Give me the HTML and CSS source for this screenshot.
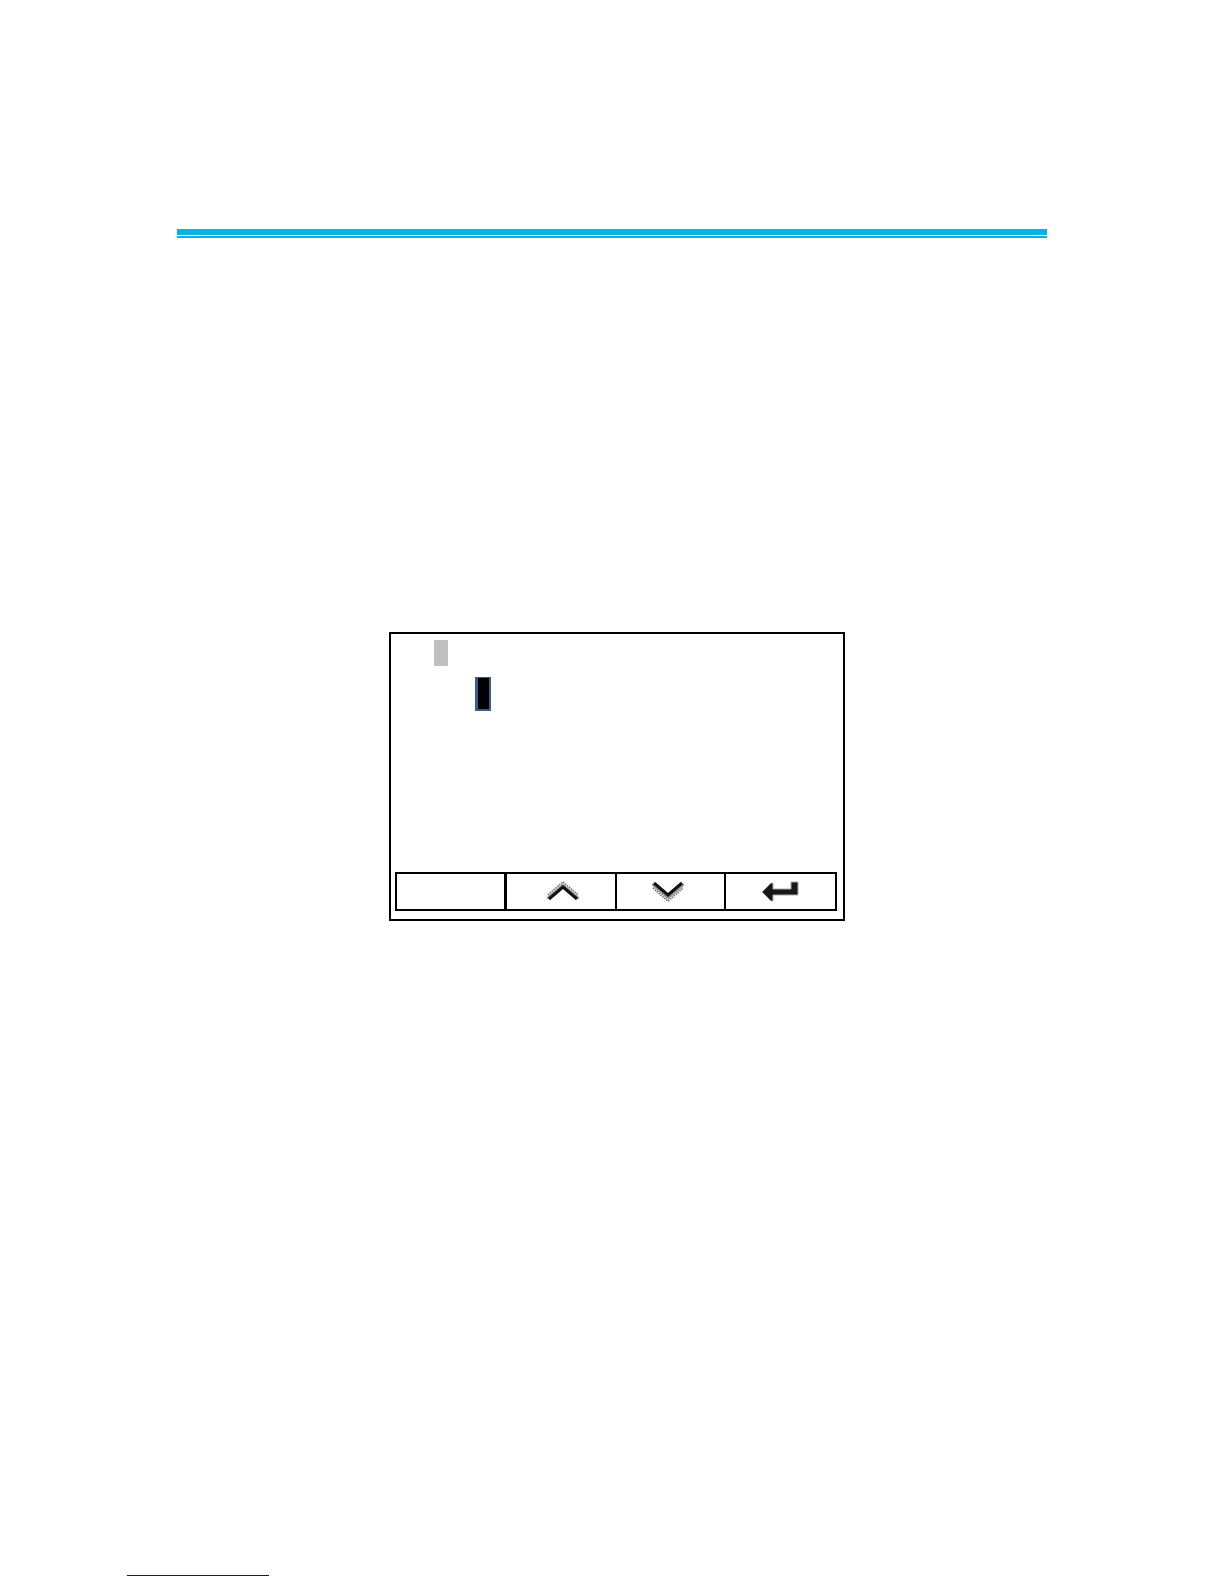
FILE: index.html
```html
<!DOCTYPE html>
<html lang="en">
<head>
<meta charset="utf-8">
<meta name="viewport" content="width=device-width, initial-scale=1">
<title>Display</title>
<link rel="stylesheet" href="styles.css">
</head>
<body class="page">
<header class="header"><div class="rule"></div></header>
<main class="content">
  <section class="screen" aria-label="Display">
    <div class="lines">
      <div class="mark"></div>
      <div class="cursor"></div>
    </div>
    <div class="keys">
      <button class="key" type="button" aria-label="Blank"></button>
      <button class="key key-up" type="button" aria-label="Up">
        <svg class="icon" width="34" height="24" viewBox="0 0 34 24" fill="none" aria-hidden="true">
          <path d="M2 15L17 2L32 15" stroke="#777" stroke-width="2" stroke-dasharray="1.5 1"/>
          <path d="M2 17L17 4L32 17" stroke="#bbb" stroke-width="2"/>
          <path d="M2 18L17 5L32 18" stroke="#666" stroke-width="1.5" stroke-dasharray="1.5 1"/>
          <path d="M1 18.500L17 6L33 18.500" stroke="#999" stroke-width="2"/>
          <path d="M3 19L17 7L31 19" stroke="#111" stroke-width="3"/>
        </svg>
      </button>
      <button class="key key-down" type="button" aria-label="Down">
        <svg class="icon" width="34" height="24" viewBox="0 0 34 24" fill="none" aria-hidden="true">
          <path d="M2 8L17 21L32 8" stroke="#777" stroke-width="2" stroke-dasharray="1.5 1"/>
          <path d="M2 6L17 19L32 6" stroke="#bbb" stroke-width="2"/>
          <path d="M2 5L17 18L32 5" stroke="#666" stroke-width="1.5" stroke-dasharray="1.5 1"/>
          <path d="M1 4L17 17L33 4" stroke="#999" stroke-width="2"/>
          <path d="M3 3L17 15L31 3" stroke="#111" stroke-width="3"/>
        </svg>
      </button>
      <button class="key key-enter" type="button" aria-label="Enter">
        <svg class="icon" width="40" height="24" viewBox="0 0 40 24" aria-hidden="true">
          <path d="M2 12L11 3H13V9H31V2H38V15H13V21H11Z" fill="#181818" stroke="#aaa" stroke-width="1"/>
        </svg>
      </button>
    </div>
  </section>
</main>
<footer class="footer"><div class="underline"></div></footer>
</body>
</html>
```
FILE: styles.css
```css
* {
  box-sizing: border-box;
}

.page {
  display: flex;
  flex-direction: column;
  min-height: 100vh;
  margin: 0;
  background: #fff;
  font-family: "Liberation Sans", Arial, sans-serif;
}

.header {
  padding: 229px 177px 0;
}

.rule {
  height: 9px;
  border-top: 6px solid #0cb0e6;
  border-bottom: 2px solid #0cb0e6;
}

.content {
  display: flex;
  justify-content: center;
  padding: 394px 0 48px 10px;
}

.screen {
  display: flex;
  flex-direction: column;
  width: 456px;
  max-width: 100%;
  border: 2px solid #000;
  padding: 6px 6px 8px 4px;
}

.lines {
  display: flex;
  flex-direction: column;
  gap: 11px;
  min-height: 232px;
}

.mark {
  width: 14px;
  height: 26px;
  margin-left: 39px;
  background: #c0c0c0;
}

.cursor {
  width: 16px;
  height: 34px;
  margin-left: 80px;
  border: solid #385d8a;
  border-width: 1px 2px 2px 3px;
  background: #000;
}

.keys {
  display: grid;
  grid-template-columns: 107fr 111fr 109fr 111fr;
  border: 2px solid #000;
}

.key {
  display: flex;
  align-items: center;
  justify-content: center;
  min-width: 0;
  height: 35px;
  border: 0;
  border-left: 2px solid #000;
  padding: 0;
  background: #fff;
}

.key:first-child {
  border-left: 0;
}

.key-up {
  border-left-width: 3px;
  padding-left: 4px;
}

.key-down {
  padding-right: 6px;
}

.key-enter {
  padding-right: 2px;
}

.icon {
  display: block;
}

.footer {
  margin-top: auto;
  padding: 0 127px 8px;
}

.underline {
  width: 142px;
  border-top: 1px solid #101080;
}
```
